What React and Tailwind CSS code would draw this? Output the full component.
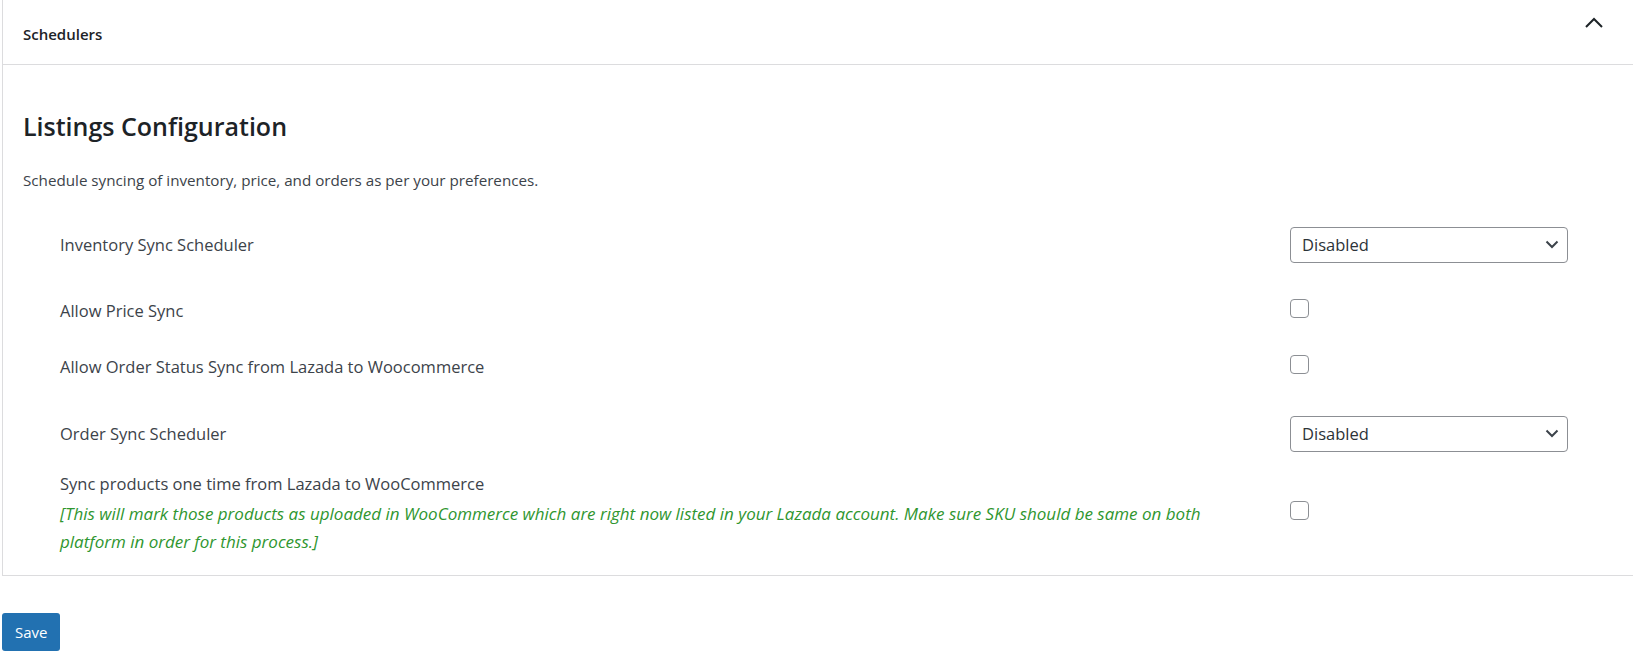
import { useState } from "react";

const Chevron = ({ up }) => (
  <svg width="20" height="12" viewBox="0 0 20 12" fill="none">
    <path
      d={up ? "M2 10 L10 2 L18 10" : "M2 2 L10 10 L18 2"}
      stroke="#1d2327"
      strokeWidth="2"
    />
  </svg>
);

const Select = () => (
  <div className="relative w-[278px]">
    <select className="w-full h-[36px] appearance-none rounded-[4px] border border-[#8c8f94] bg-white pl-[11px] pr-8 text-[16.5px] text-[#2c3338] outline-none">
      <option>Disabled</option>
      <option>Every 5 minutes</option>
      <option>Hourly</option>
      <option>Daily</option>
    </select>
    {/* dropdown arrow */}
    <span className="pointer-events-none absolute right-[9px] top-[13px]">
      <svg width="14" height="9" viewBox="0 0 14 9" fill="none">
        <path d="M1.5 1.5 L7 7 L12.5 1.5" stroke="#3c434a" strokeWidth="2" />
      </svg>
    </span>
  </div>
);

const Checkbox = () => {
  const [checked, setChecked] = useState(false);
  return (
    <input
      type="checkbox"
      checked={checked}
      onChange={() => setChecked(!checked)}
      className="appearance-none w-[19px] h-[19px] rounded-[4px] border border-[#8c8f94] bg-white"
    />
  );
};

const Row = ({ height, children, control, className = "" }) => (
  <div className={`flex items-center ${height} ${className}`}>
    <div className="w-[1267px] pl-[37px] pr-[68px] text-[16.5px] text-[#3c434a]">
      {children}
    </div>
    <div>{control}</div>
  </div>
);

export default function App() {
  const [open, setOpen] = useState(true);

  return (
    <div className="min-h-screen bg-white font-['Open_Sans',sans-serif] text-[#3c434a]">
      <div className="ml-[2px] border-l border-b border-[#dcdcde]">
        {/* Panel header */}
        <div className="h-[65px] flex items-start justify-between border-b border-[#dcdcde]">
          <span className="pl-[20px] pt-[23px] text-[15px] font-semibold text-[#1d2327]">
            Schedulers
          </span>
          <button onClick={() => setOpen(!open)} className="mt-[17px] mr-[29px]">
            <Chevron up={open} />
          </button>
        </div>

        {open && (
          <div className="pl-[20px]">
            <h2 className="pt-[45px] text-[25px] leading-[32px] font-semibold text-[#1d2327]">
              Listings Configuration
            </h2>
            <p className="mt-[28px] text-[15.2px] leading-[20px] text-[#3c434a]">
              Schedule syncing of inventory, price, and orders as per your preferences.
            </p>

            <div className="mt-[22px]">
              <Row height="h-[66px]" control={<Select />}>
                Inventory Sync Scheduler
              </Row>
              <Row height="h-[66px]" control={<Checkbox />}>
                Allow Price Sync
              </Row>
              <Row height="h-[46px]" control={<Checkbox />}>
                Allow Order Status Sync from Lazada to Woocommerce
              </Row>
              <Row height="h-[80px]" className="pt-[8px]" control={<Select />}>
                Order Sync Scheduler
              </Row>
              <Row height="" className="pb-[19px]" control={<Checkbox />}>
                <div className="leading-[28px]">Sync products one time from Lazada to WooCommerce</div>
                <p className="mt-[2px] leading-[28px] italic text-[17px] text-[#2f962f]">
                  [This will mark those products as uploaded in WooCommerce which are right now listed in your Lazada account. Make sure SKU should be same on both platform in order for this process.]
                </p>
              </Row>
            </div>
          </div>
        )}
      </div>

      <button className="mt-[37px] ml-[2px] h-[38px] px-[13px] rounded-[3px] bg-[#2271b1] text-[15px] text-white">
        Save
      </button>
    </div>
  );
}
